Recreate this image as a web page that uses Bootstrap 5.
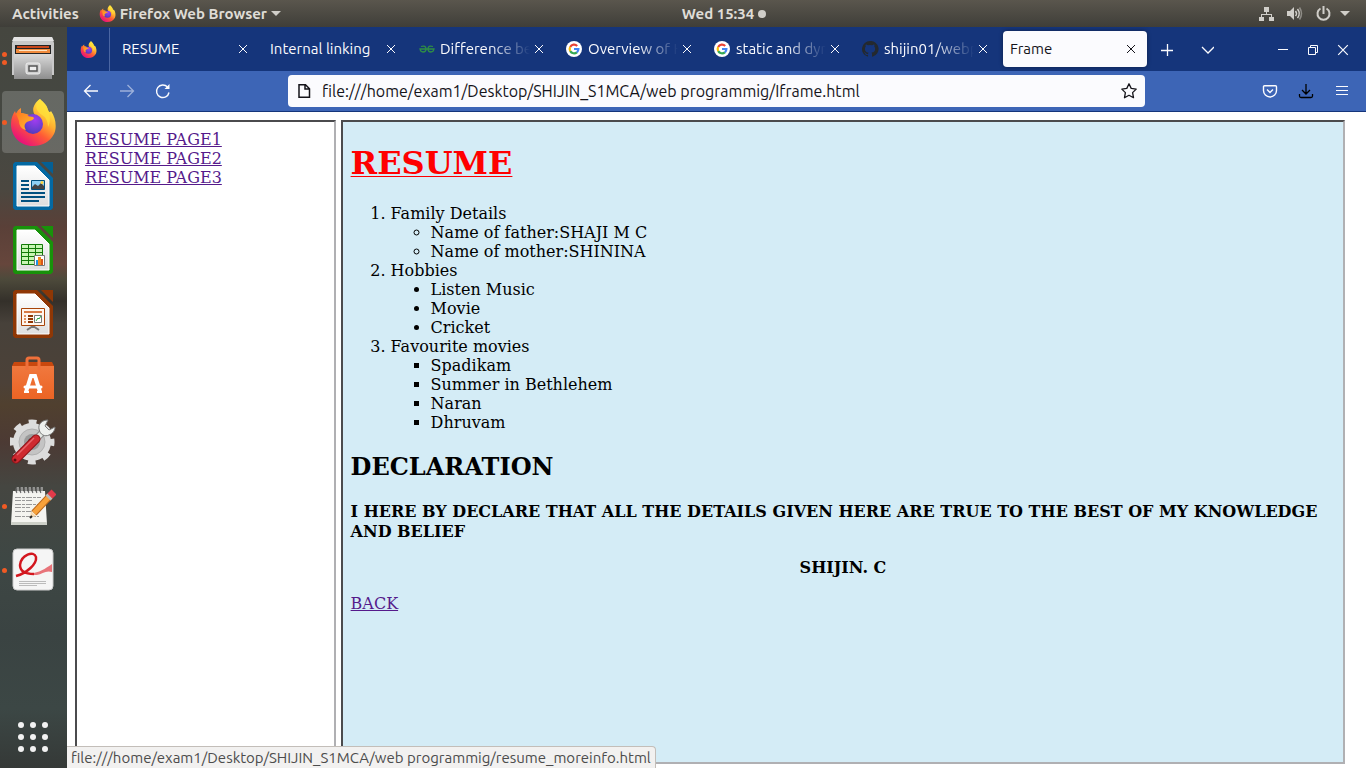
<!DOCTYPE html>
<html lang="en">
<head>
<meta charset="utf-8">
<meta name="viewport" content="width=device-width, initial-scale=1">
<title>Frame</title>
<link href="https://cdn.jsdelivr.net/npm/bootstrap@5.3.0/dist/css/bootstrap.min.css" rel="stylesheet">
<style>
  :root { --ui: Ubuntu, "Noto Sans", "Open Sans", sans-serif; --page: "DejaVu Serif", serif; }
  body { font-family: var(--ui); font-size: 15px; line-height: 20px; background: #fff; }
  button { border: 0; background: none; padding: 0; color: inherit; }
  svg { display: block; flex: none; }

  .topbar { height: 27px; background: linear-gradient(#5a564d, #3f3e39); color: #dfdcd6; font-weight: 700; text-shadow: 0 1px 1px #222; }
  .topbar button { font-weight: 700; }
  .topbar .side { flex: 1 1 0; }
  .app-side { padding-right: 98px; }
  .indicators { color: #d0cec9; }
  .caret { border: 5px solid transparent; border-top-color: #d0cec9; border-bottom: 0; }
  .dot { width: 8px; height: 8px; background: #d0cec9; }

  .work-area { min-height: 0; }
  .window { min-width: 0; }
  .dock { width: 67px; padding: 0 3px 0 2px;
    background: linear-gradient(#45463f 0, #454842 13%, #4b4740 22%, #5a4038 27%, #66463c 32%, #4d4a3b 34%, #34302a 37%, #47413a 40%, #4c4138 48%, #50402f 51%, #4c3a34 56%, #454641 62%, #3e4744 72%, #3a4342 82%, #3c4745 92%, #353937 100%); }
  .dock button { height: 62px; margin-bottom: 2px; position: relative; display: flex; align-items: center; justify-content: center; border-radius: 4px; }
  .dock .current { background: #ffffff2e; }
  .pips { position: absolute; left: 0; top: 0; bottom: 0; display: flex; flex-direction: column; justify-content: center; gap: 3px; }
  .pips i { width: 5px; height: 5px; border-radius: 50%; background: #f05a24; }

  .tabstrip { height: 44px; padding-top: 1px; background: #15357b; color: #fbfbfe; }
  .pinned { width: 43px; border-right: 1px solid #4a66a3; }
  .tabs { padding-left: 3px; min-width: 0; }
  .tab-item { flex: 0 1 148px; min-width: 0; padding: 3px 2px 4px; }
  .tab-face { height: 36px; padding: 0 7px; border-radius: 4px; }
  .tab-face.on { background: #fbfbfe; color: #15141a; box-shadow: 0 0 4px #0006; }
  .tab-label { flex: 1 1 0; min-width: 0; overflow: hidden; white-space: nowrap; text-align: left; color: inherit; }
  .fade-out { -webkit-mask-image: linear-gradient(to left, transparent, #000 40px); mask-image: linear-gradient(to left, transparent, #000 40px); }
  .x-btn { width: 20px; height: 20px; }
  .tab-item .x-btn { width: 18px; }
  .sq { width: 36px; height: 36px; }
  .win { width: 30px; height: 36px; }
  .center-all { display: flex; align-items: center; justify-content: center; flex: none; }

  .toolbar { height: 41px; background: #3d65b6; border-bottom: 1px solid #15357b; color: #fbfbfe; }
  .toolbar .side { width: 221px; padding: 0 6px; flex: none; }
  .urlbox { height: 32px; background: #fbfbfe; border-radius: 4px; color: #15141a; min-width: 0; }
  .urlbox input { border: 0; outline: 0; background: none; padding: 0 0 0 2px; min-width: 0; font-size: 16px; color: #15141a; }

  .viewport { padding: 8px 8px 4px; gap: 5px; font-family: var(--page); font-size: 16px; line-height: 19px; color: #000; min-height: 0; }
  .frame-box { box-sizing: content-box; border: 2px solid; border-color: #4b4b4d #b0b0b3 #b0b0b3 #4b4b4d; overflow: hidden; }
  .menu-frame { width: 20%; padding-top: 8px; }
  .menu-frame a { margin-left: 8px; }
  .main-frame { width: 78%; background: #d4ecf6; }
  .doc { padding: 22px 8px 8px; }
  .viewport a { color: #551a8b; text-decoration-thickness: 1px; }
  .doc h1 { font-size: 32px; line-height: 38px; font-weight: 700; color: #f00; margin: 0 0 22px; text-decoration: underline; text-decoration-thickness: 1px; text-underline-offset: 2px; }
  .doc h2 { font-size: 24px; line-height: 28px; font-weight: 700; margin: 21px 0; }
  .doc ol, .doc ul { margin: 0; padding-left: 40px; }
  .doc p { line-height: 20px; margin: 0 0 16px; }
  .hollow { list-style: circle; } .filled { list-style: disc; } .boxed { list-style: square; }

  .status { position: absolute; left: 0; bottom: 0; height: 22px; padding: 1px 4px 0; background: #f2f1f0; border: 1px solid #c3beb9; border-left: 0; border-bottom: 0; border-top-right-radius: 4px; color: #4c4c4c; white-space: nowrap; }
</style>
</head>
<body class="vh-100 d-flex flex-column overflow-hidden">

<svg width="0" height="0" class="position-absolute" aria-hidden="true">
  <defs>
    <linearGradient id="fire" x1=".85" y1=".1" x2=".25" y2=".95"><stop offset="0" stop-color="#fff44f"/><stop offset=".35" stop-color="#ffb02e"/><stop offset=".62" stop-color="#ff5a36"/><stop offset="1" stop-color="#e7107c"/></linearGradient>
    <radialGradient id="globe" cx=".6" cy=".3" r=".8"><stop offset="0" stop-color="#a23cf0"/><stop offset=".6" stop-color="#6a3ed0"/><stop offset="1" stop-color="#473ab0"/></radialGradient>
    <linearGradient id="flame" x1="0" y1="0" x2="1" y2="1"><stop offset="0" stop-color="#ff7a20"/><stop offset="1" stop-color="#ffc030"/></linearGradient>
    <linearGradient id="steel" x1="0" y1="0" x2="0" y2="1"><stop offset="0" stop-color="#dadada"/><stop offset="1" stop-color="#8e8e8e"/></linearGradient>
    <linearGradient id="sheet" x1="0" y1="0" x2="0" y2="1"><stop offset="0" stop-color="#fff"/><stop offset="1" stop-color="#dedede"/></linearGradient>
    <linearGradient id="bag" x1="0" y1="0" x2="0" y2="1"><stop offset="0" stop-color="#f0783e"/><stop offset="1" stop-color="#ec6424"/></linearGradient>
    <symbol id="firefox" viewBox="0 0 46 48">
      <path fill="url(#fire)" d="M30 1c3 3 7 6 8 11 1 2 2 3 3 1 5 7 6 17 3 23-4 8-12 12-21 12C10 48 1 38 1 26c0-6 2-10 4-13l1 3c1-3 3-5 5-6v5c3 0 6 1 8 2h6c-4-5-1-12 5-16z"/>
      <circle cx="23" cy="26" r="10" fill="url(#globe)"/>
      <path fill="url(#flame)" d="M6 15c5-1 9 1 12 3 2 1 5 0 6 2 0 2-5 3-7 4-3 2-3 5-1 8-5-1-7-5-7-9-1-3-2-5-3-8z"/>
      <path fill="#ffe03a" d="M30 1c3 3 7 6 8 11 2 5 3 12 0 17 0-5-2-10-6-12-5-3-9-10-2-16z" opacity=".75"/>
    </symbol>
    <symbol id="google" viewBox="0 0 16 16">
      <circle cx="8" cy="8" r="8" fill="#fff"/>
      <g fill="none" stroke-width="2.2"><path stroke="#ea4335" d="M4.200 5.900A4.400 4.400 0 0 1 11.200 4.900"/><path stroke="#fbbc05" d="M4.200 10.100A4.400 4.400 0 0 1 4.200 5.900"/><path stroke="#34a853" d="M10.900 11.300A4.400 4.400 0 0 1 4.200 10.100"/><path stroke="#4285f4" d="M8 8h4.400A4.400 4.400 0 0 1 10.900 11.300"/></g>
    </symbol>
    <symbol id="cross" viewBox="0 0 10 10"><path d="M1 1l8 8M9 1L1 9" stroke="currentColor" stroke-width="1" fill="none"/></symbol>
  </defs>
</svg>

<header class="topbar d-flex align-items-center flex-shrink-0">
  <div class="side app-side d-flex align-items-center">
    <button type="button" class="ms-2 ps-1 me-3 pe-1">Activities</button>
    <button type="button" class="d-flex align-items-center gap-1"><svg width="17" height="17"><use href="#firefox"/></svg><span>Firefox Web Browser</span><span class="caret"></span></button>
  </div>
  <button type="button" class="d-flex align-items-center gap-1">Wed 15:34<span class="dot rounded-circle"></span></button>
  <div class="side indicators d-flex align-items-center justify-content-end gap-2 pe-3">
    <svg width="20" height="16" viewBox="0 0 20 16" fill="currentColor"><path d="M8 1h5v5H8zM3 11h5v4H3zM13 11h5v4h-5zM10 6h1v2h5v3h-1V9H6v2H5V8h5z"/></svg>
    <svg width="20" height="16" viewBox="0 0 20 16"><path fill="currentColor" d="M3 5h3l4-4v13l-4-4H3z"/><g fill="none" stroke="currentColor" stroke-width="1.500"><path d="M11.500 5q2 2.500 0 5"/><path d="M13.500 3q3.500 4.500 0 9"/><path opacity=".5" d="M15.500 1.500q4 6 0 12"/></g></svg>
    <svg width="20" height="16" viewBox="0 0 20 16" fill="none" stroke="currentColor" stroke-width="2"><path d="M8.500 2.500a6 6 0 1 0 6 0M11.500 0v8"/></svg>
    <span class="caret"></span>
  </div>
</header>

<div class="work-area d-flex flex-grow-1">
  <nav class="dock d-flex flex-column flex-shrink-0 pt-0" aria-label="Dock">
    <button type="button" aria-label="Files"><span class="pips"><i></i><i></i></span>
      <svg width="44" height="46" viewBox="0 0 44 46"><path fill="#c9c9c9" d="M3 2h38l2 6v32H1V8z"/><path fill="#e4e4e4" d="M3 2h38l2 4H1z"/><path fill="#242424" d="M4 10h36v9H4z"/><path fill="#c9471b" d="M6 11h32v2H6z"/><path fill="#f08a3c" d="M5 14h34v4H5z"/><path fill="#ffe2c0" d="M8 15h28v1H8z"/><path fill="url(#steel)" d="M3 19h38v25H3z"/><path fill="#d8d8d8" d="M3 19h38v1H3z"/><rect x="15" y="28" width="14" height="11" rx="2" fill="#d0d0d0" stroke="#eee"/><path fill="#eee" stroke="#555" stroke-width="1.500" d="M18 31h8v5h-8z"/></svg></button>
    <button type="button" class="current" aria-label="Firefox"><span class="pips"><i></i></span><svg width="46" height="48"><use href="#firefox"/></svg></button>
    <button type="button" aria-label="Writer">
      <svg width="40" height="48" viewBox="0 0 40 48"><path fill="#0369a3" d="M2 0h22l16 16v30l-2 2H2l-2-2V2z"/><path fill="#045f94" d="M28 0h12v12z"/><path fill="url(#sheet)" stroke="#fff" d="M4 4h18l14 14v26H4z"/><path stroke="#00507f" stroke-width="2" d="M8 19h8M8 23h8M8 27h8M8 31h24M8 35h24M8 39h18"/><path fill="#8ed0f5" stroke="#00507f" d="M18.500 18.500h13v9h-13z"/><path fill="#444" d="M19 27v-2l3-3 3 2 3-3 3 3v3z"/><circle cx="29" cy="20.500" r="1.500" fill="#ffd23e"/></svg></button>
    <button type="button" aria-label="Calc">
      <svg width="40" height="48" viewBox="0 0 40 48"><path fill="#18920a" d="M2 0h22l16 16v30l-2 2H2l-2-2V2zM28 0h12v12z"/><path fill="url(#sheet)" stroke="#fff" d="M4 4h18l14 14v26H4z"/><path fill="#c8f5b4" stroke="#127a08" d="M8.500 18.500h21v20h-21zM8.500 22.500h21M8.500 26.500h21M8.500 30.500h21M8.500 34.500h21M15.500 18.500v20M22.500 18.500v20"/><path fill="#fff" stroke="#777" d="M21.500 29.500h10v10h-10z"/><path fill="#1b93e6" d="M23 34h2v5h-2z"/><path fill="#f28a1c" d="M25 31h3v8h-3z"/><path fill="#d8561a" d="M28 33h2v6h-2z"/></svg></button>
    <button type="button" aria-label="Impress">
      <svg width="40" height="48" viewBox="0 0 40 48"><path fill="#8f3705" d="M2 0h22l16 16v30l-2 2H2l-2-2V2zM28 0h12v12z"/><path fill="url(#sheet)" stroke="#fff" d="M4 4h18l14 14v26H4z"/><path d="M20 35v3M20 36l-6 4M20 36l6 4" stroke="#777" stroke-width="2"/><path fill="#fff6ee" stroke="#a84408" d="M8.500 18.500h23v17h-23z"/><path stroke="#d97a45" stroke-width="2" d="M11 22h18"/><path stroke="#e09060" stroke-width="2" d="M11 26h2M11 29h2M11 32h2"/><path stroke="#8f3705" stroke-width="2" d="M15 26h5M15 29h5M15 32h5"/><path fill="#fff" stroke="#777" d="M21.500 25.500h7v7h-7z"/><path fill="none" stroke="#28a745" d="M23 31l2-3 1 1 2-3"/></svg></button>
    <button type="button" aria-label="Software">
      <svg width="42" height="44" viewBox="0 0 42 44"><path fill="url(#bag)" d="M0 10h42v33H0z"/><path fill="#c9480e" d="M2 6h38l2 4H0z"/><path fill="none" stroke="#f0703a" stroke-width="3" d="M15 14V4q0-2 2-2h8q2 0 2 2v10"/><path fill="none" stroke="#fff" stroke-width="4" d="M14 36l5-16h4l5 16"/><path stroke="#fff" stroke-width="3" stroke-linecap="round" d="M13 31h16"/><path stroke="#fff" stroke-width="2" d="M12 36h5M25 36h5"/></svg></button>
    <button type="button" aria-label="Settings">
      <svg width="46" height="46" viewBox="0 0 46 46"><circle cx="22" cy="23" r="19" fill="#dcdcdc"/><circle cx="22" cy="23" r="20" fill="none" stroke="#dcdcdc" stroke-width="5" stroke-dasharray="7.850 7.850" stroke-dashoffset="3.900"/><circle cx="22" cy="23" r="13" fill="#c4c4c4" stroke="#b0b0b0"/><circle cx="22" cy="23" r="8" fill="#9a9a9a"/><circle cx="22" cy="23" r="4" fill="#444"/><path stroke="#8a8a8a" stroke-width="7" d="M24 22L34 12"/><path stroke="#e4e8e4" stroke-width="5" d="M24 22L34 12"/><path fill="#eef0ee" stroke="#777" d="M38 1c-6 0-10 4-9 9 1 6 6 8 10 6 3-1 6-4 6-8l-6 3-4-4z"/><path stroke="#8e1218" stroke-width="9" stroke-linecap="round" d="M6 40L26 20"/><path stroke="#cf2a30" stroke-width="7" stroke-linecap="round" d="M6 40L26 20"/><path stroke="#e8646a" stroke-width="1.500" d="M7 36L24 19"/><circle cx="5" cy="41" r="1.500" fill="#5c0c10"/></svg></button>
    <button type="button" aria-label="Text Editor"><span class="pips"><i></i></span>
      <svg width="46" height="42" viewBox="0 0 46 42"><path fill="#f4f4f0" d="M3 6h32l2 33H1z"/><path fill="#cdd0c8" d="M1 37h36v3H1z"/><g fill="none" stroke="#666" stroke-width="1.200"><path d="M7 8q-2-3 0-6M11 8q-2-3 0-6M15 8q-2-3 0-6M19 8q-2-3 0-6M23 8q-2-3 0-6M27 8q-2-3 0-6M31 8q-2-3 0-6"/></g><path stroke="#ddd" d="M8 8V2M12 8V2M16 8V2M20 8V2M24 8V2M28 8V2M32 8V2"/><path stroke="#999" stroke-dasharray="6 1 3 1" d="M5 12.500h26M5 15.500h18M5 19.500h25M5 22.500h15M5 26.500h20M5 31.500h24"/><path stroke="#b9661a" stroke-width="7" d="M24 28L40 11"/><path stroke="#f7a13a" stroke-width="5" d="M24 28L40 11"/><path fill="#f5d9b0" d="M21 26l5 5-6 2z"/><path stroke="#222" stroke-width="2" d="M20 33l2-2"/><path stroke="#bbb" stroke-width="7" d="M38 13l2-2"/><path stroke="#e23a4a" stroke-width="7" d="M40 11l4-4"/></svg></button>
    <button type="button" aria-label="Document Viewer"><span class="pips"><i></i></span>
      <svg width="42" height="44" viewBox="0 0 42 44"><rect x="1" y="1" width="40" height="41" rx="4" fill="#f5f5f5" stroke="#ccc"/><path fill="#e8747a" d="M17 25c8 1 16-4 23-9v8c-6-2-10 2-15 3-3 0-6 0-8-2z"/><path fill="none" stroke="#d3161e" stroke-width="2.500" d="M4 28C15 25 25 16 24 9 22 2 9 7 8 17c0 7 7 9 14 9"/><path stroke="#bbb" d="M7 33.500h27M7 35.500h27M7 37.500h18"/></svg></button>
    <button type="button" class="mt-auto mb-0" aria-label="Show Applications">
      <svg width="30" height="30" viewBox="0 0 30 30" fill="#f2f2f2"><circle cx="3" cy="3" r="3"/><circle cx="15" cy="3" r="3"/><circle cx="27" cy="3" r="3"/><circle cx="3" cy="15" r="3"/><circle cx="15" cy="15" r="3"/><circle cx="27" cy="15" r="3"/><circle cx="3" cy="27" r="3"/><circle cx="15" cy="27" r="3"/><circle cx="27" cy="27" r="3"/></svg></button>
  </nav>

  <div class="window d-flex flex-column flex-grow-1 position-relative">
    <div class="tabstrip d-flex align-items-center flex-shrink-0">
      <button type="button" class="pinned h-100 center-all" aria-label="Pinned tab"><svg width="17" height="17"><use href="#firefox"/></svg></button>
      <div class="tabs d-flex flex-grow-1">
        <div class="tab-item"><div class="tab-face d-flex align-items-center"><button type="button" class="tab-label">RESUME</button><button type="button" class="x-btn center-all" aria-label="Close tab"><svg width="10" height="10"><use href="#cross"/></svg></button></div></div>
        <div class="tab-item"><div class="tab-face d-flex align-items-center"><button type="button" class="tab-label">Internal linking</button><button type="button" class="x-btn center-all" aria-label="Close tab"><svg width="10" height="10"><use href="#cross"/></svg></button></div></div>
        <div class="tab-item"><div class="tab-face d-flex align-items-center"><svg class="me-1" width="18" height="16" viewBox="0 0 18 16" fill="none" stroke="#2f8d46" stroke-width="1.300"><path d="M3 5.500q5-1.500 5 2.500 0 3-3 3-2.500 0-3-3h14q-.5 3-3 3-3 0-3-3 0-4 5-2.500"/></svg><button type="button" class="tab-label fade-out">Difference be</button><button type="button" class="x-btn center-all" aria-label="Close tab"><svg width="10" height="10"><use href="#cross"/></svg></button></div></div>
        <div class="tab-item"><div class="tab-face d-flex align-items-center"><svg class="me-1" width="18" height="16"><use href="#google" width="16" height="16"/></svg><button type="button" class="tab-label fade-out">Overview of H</button><button type="button" class="x-btn center-all" aria-label="Close tab"><svg width="10" height="10"><use href="#cross"/></svg></button></div></div>
        <div class="tab-item"><div class="tab-face d-flex align-items-center"><svg class="me-1" width="18" height="16"><use href="#google" width="16" height="16"/></svg><button type="button" class="tab-label fade-out">static and dyn</button><button type="button" class="x-btn center-all" aria-label="Close tab"><svg width="10" height="10"><use href="#cross"/></svg></button></div></div>
        <div class="tab-item"><div class="tab-face d-flex align-items-center"><svg class="me-1" width="18" height="16" viewBox="0 0 18 16" fill="#24292e"><path d="M8 0a8 8 0 0 0-2.530 15.590c.4.070.55-.17.550-.380v-1.340C3.800 14.350 3.330 12.900 3.330 12.900c-.360-.920-.890-1.170-.890-1.170-.730-.5.050-.490.050-.490.810.060 1.230.830 1.230.830.720 1.230 1.880.870 2.340.670.070-.520.280-.870.510-1.070-1.780-.2-3.640-.890-3.640-3.950 0-.870.310-1.590.820-2.150-.080-.2-.360-1.020.080-2.120 0 0 .670-.220 2.200.820a7.600 7.600 0 0 1 4 0c1.530-1.040 2.200-.820 2.200-.820.440 1.100.160 1.920.080 2.120.510.560.820 1.280.820 2.150 0 3.070-1.870 3.750-3.650 3.950.290.250.540.730.540 1.480v2.200c0 .210.150.460.550.380A8 8 0 0 0 8 0z"/></svg><button type="button" class="tab-label fade-out">shijin01/webp</button><button type="button" class="x-btn center-all" aria-label="Close tab"><svg width="10" height="10"><use href="#cross"/></svg></button></div></div>
        <div class="tab-item"><div class="tab-face on d-flex align-items-center"><button type="button" class="tab-label">Frame</button><button type="button" class="x-btn center-all" aria-label="Close tab"><svg width="10" height="10"><use href="#cross"/></svg></button></div></div>
        <button type="button" class="sq center-all align-self-center" aria-label="New tab"><svg width="14" height="14" viewBox="0 0 14 14" stroke="currentColor" stroke-width="1.300"><path d="M7.500 1v12M1 7.500h12"/></svg></button>
        <button type="button" class="sq center-all align-self-center ms-1" aria-label="List all tabs"><svg width="14" height="14" viewBox="0 0 14 14" fill="none" stroke="currentColor" stroke-width="1.300"><path d="M2 4l6 6 6-6"/></svg></button>
      </div>
      <div class="d-flex pe-2 flex-shrink-0">
        <button type="button" class="win center-all" aria-label="Minimize"><svg width="10" height="10" viewBox="0 0 10 10"><path stroke="currentColor" d="M0 4.500h10"/></svg></button>
        <button type="button" class="win center-all" aria-label="Restore"><svg width="10" height="10" viewBox="0 0 10 10" fill="none" stroke="currentColor"><path d="M.5 2.500h7v7h-7zM2.500 2V.5h7v7H8"/></svg></button>
        <button type="button" class="win center-all" aria-label="Close"><svg width="12" height="12"><use href="#cross"/></svg></button>
      </div>
    </div>

    <div class="toolbar d-flex align-items-center flex-shrink-0">
      <div class="side d-flex">
        <button type="button" class="sq center-all" aria-label="Back"><svg width="16" height="16" viewBox="0 0 16 16" fill="none" stroke="currentColor" stroke-width="1.300"><path d="M15 8H1.500M7.500 2l-6 6 6 6"/></svg></button>
        <button type="button" class="sq center-all opacity-50" aria-label="Forward"><svg width="16" height="16" viewBox="0 0 16 16" fill="none" stroke="currentColor" stroke-width="1.300"><path d="M1 8h13.500M8.500 2l6 6-6 6"/></svg></button>
        <button type="button" class="sq center-all" aria-label="Reload"><svg width="16" height="16" viewBox="0 0 16 16" fill="none" stroke="currentColor" stroke-width="1.400"><path d="M14 9.500A6.300 6.300 0 1 1 12.500 4"/><path d="M14.500 1v5h-5z" fill="currentColor" stroke="none"/></svg></button>
      </div>
      <div class="urlbox d-flex align-items-center flex-grow-1 px-2">
        <svg class="me-2" width="16" height="16" viewBox="0 0 16 16" fill="none" stroke="currentColor" stroke-width="1.500"><path d="M3 1.700h6.500l4 4v8.600H3zM9 2v4h4"/></svg>
        <input class="flex-grow-1" type="text" aria-label="Address" value="file:///home/exam1/Desktop/SHIJIN_S1MCA/web programmig/Iframe.html">
        <button type="button" aria-label="Bookmark this page"><svg width="16" height="16" viewBox="0 0 16 16" fill="none" stroke="currentColor" stroke-width="1.300" stroke-linejoin="round"><path d="M8 .8l2.200 4.600 5 .7-3.600 3.500.9 5.100L8 12.300l-4.500 2.400.9-5.100L.8 6.100l5-.7z"/></svg></button>
      </div>
      <div class="side d-flex justify-content-end">
        <button type="button" class="sq center-all" aria-label="Save to Pocket"><svg width="16" height="16" viewBox="0 0 16 16" fill="none" stroke="currentColor" stroke-width="1.400"><path d="M2.500 2.700h11q1 0 1 1V7.500a6.500 6.500 0 0 1-13 0V3.700q0-1 1-1z"/><path d="M5 6.500l3 3 3-3"/></svg></button>
        <button type="button" class="sq center-all text-black" aria-label="Downloads"><svg width="16" height="16" viewBox="0 0 16 16" fill="none" stroke="currentColor" stroke-width="1.300"><path d="M8 1v9.500M4 7l4 4 4-4M1.500 11v2q0 1.500 1.500 1.500h10q1.500 0 1.500-1.500v-2"/></svg></button>
        <button type="button" class="sq center-all" aria-label="Open menu"><svg width="12" height="12" viewBox="0 0 12 12" stroke="currentColor"><path d="M0 1.500h12M0 5.500h12M0 9.500h12"/></svg></button>
      </div>
    </div>

    <main class="viewport d-flex flex-grow-1">
      <nav class="frame-box menu-frame d-flex flex-column align-items-start flex-shrink-0" aria-label="Resume pages">
        <a href="#page1">RESUME PAGE1</a>
        <a href="#page2">RESUME PAGE2</a>
        <a href="#page3">RESUME PAGE3</a>
      </nav>
      <section class="frame-box main-frame flex-shrink-0">
        <div class="doc">
          <h1>RESUME</h1>
          <ol>
            <li>Family Details
              <ul class="hollow"><li>Name of father:SHAJI M C</li><li>Name of mother:SHININA</li></ul></li>
            <li>Hobbies
              <ul class="filled"><li>Listen Music</li><li>Movie</li><li>Cricket</li></ul></li>
            <li>Favourite movies
              <ul class="boxed"><li>Spadikam</li><li>Summer in Bethlehem</li><li>Naran</li><li>Dhruvam</li></ul></li>
          </ol>
          <h2>DECLARATION</h2>
          <p class="fw-bold">I HERE BY DECLARE THAT ALL THE DETAILS GIVEN HERE ARE TRUE TO THE BEST OF MY KNOWLEDGE AND BELIEF</p>
          <p class="fw-bold text-center">SHIJIN. C</p>
          <p><a href="#back">BACK</a></p>
        </div>
      </section>
    </main>
    <div class="status" role="status">file:///home/exam1/Desktop/SHIJIN_S1MCA/web programmig/resume_moreinfo.html</div>
  </div>
</div>
<script src="https://cdn.jsdelivr.net/npm/bootstrap@5.3.0/dist/js/bootstrap.bundle.min.js"></script>
</body>
</html>
